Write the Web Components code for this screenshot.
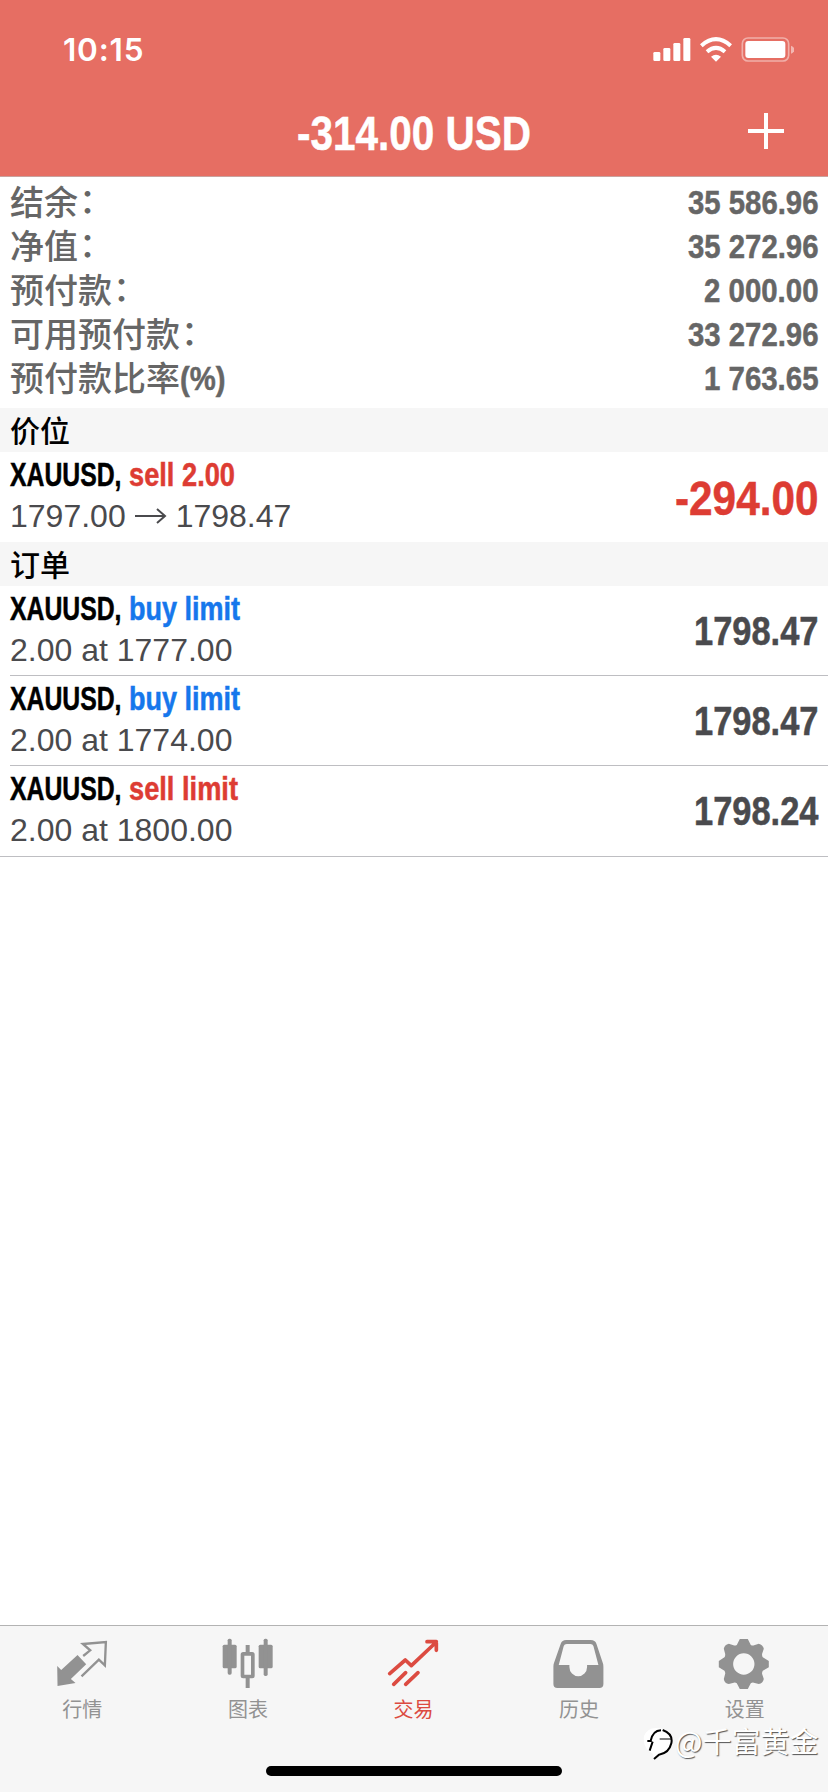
<!DOCTYPE html>
<html lang="zh-CN">
<head>
<meta charset="utf-8">
<title>交易</title>
<style>
body{margin:0;background:#fff;font-family:"Liberation Sans","Noto Sans CJK SC",sans-serif}
</style>
</head>
<body>
<trade-app></trade-app>
<script>
const define=(name,html,setup)=>customElements.define(name,class extends HTMLElement{
  connectedCallback(){
    if(this.shadowRoot)return;
    const t=document.createElement('template');
    t.innerHTML=html;
    this.attachShadow({mode:'open'}).appendChild(t.content.cloneNode(true));
    if(setup)setup(this,this.shadowRoot);
  }
});

// Condensed bold text: natural glyphs squeezed horizontally to the width in "w".
const ruler=document.createElement('canvas').getContext('2d');
define('cond-text',`<style>
:host{display:block;flex:none}
span{display:block;width:max-content;white-space:pre;font-family:"Liberation Sans",sans-serif;font-weight:700;transform-origin:0 0;-webkit-text-stroke:.5px currentColor}
</style><span></span>`,(el,r)=>{
  const s=r.querySelector('span'),a=n=>el.getAttribute(n),size=+a('size'),w=+a('w');
  ruler.font=`700 ${size}px "Liberation Sans"`;
  const natural=ruler.measureText(a('text')).width;
  el.style.width=w+'px';el.style.height=a('h')+'px';
  s.style.fontSize=size+'px';
  s.style.lineHeight=2*(+a('base')+.8-.3465*size)+'px';
  s.style.marginRight=(w-natural)+'px';
  s.style.transform=`scaleX(${w/natural})`;
  s.textContent=a('text');
});

define('status-bar',`<style>
:host{display:flex;justify-content:space-between;height:88px;box-sizing:border-box;padding:0 34px 0 63px;color:#fff}
.time{font:600 31.5px/38px Inter,sans-serif;margin-top:31px;letter-spacing:.8px}
svg{display:block;margin-top:34px}
</style>
<span class="time">10:15</span>
<svg width="142" height="32" viewBox="713 102 426 96" fill="#fff">
<rect x="717" y="156" width="21" height="27" rx="4"/><rect x="747" y="144" width="21" height="39" rx="4"/>
<rect x="777" y="129" width="21" height="54" rx="4"/><rect x="807" y="114" width="21" height="69" rx="4"/>
<g fill="none" stroke="#fff" stroke-width="12"><path d="M861 137Q905 98 949 137"/><path d="M878 155Q905 132 932 155"/></g>
<path d="M890 170Q905 158 920 170L905 185Z"/>
<rect x="984" y="114" width="139" height="69" rx="17" fill="none" stroke="#fff" stroke-opacity=".45" stroke-width="5"/>
<rect x="993" y="123" width="120" height="51" rx="9"/><path d="M1130 137Q1140 141 1140 149Q1140 157 1130 161Z" fill-opacity=".5"/>
</svg>`);

define('app-header',`<style>
:host{display:block;height:177px;box-sizing:border-box;background:#e66e63;border-bottom:1px solid #c9a29e;color:#fff}
.bar{display:grid;grid-template-columns:1fr auto 1fr;height:88px}
svg{display:block;justify-self:end;margin:25px 44px 0 0}
</style><status-bar></status-bar>
<div class="bar"><span></span><cond-text text="-314.00 USD" size="49" w="234" h="80" base="61.2"></cond-text>
<svg width="36" height="36" viewBox="0 0 36 36"><path d="M18 0V36M0 18H36" stroke="#fff" stroke-width="4"/></svg></div>`);

define('summary-row',`<style>
:host{display:flex;justify-content:space-between;height:44px;padding:0 10px;color:#666}
.l{font:500 34px/39px "Noto Sans CJK SC",sans-serif;display:flex;white-space:nowrap}
i{font-style:normal;position:relative;top:-2px;left:1px}
</style><span class="l"></span>`,(el,r)=>{
  const l=r.querySelector('.l'),a=n=>el.getAttribute(n);
  l.textContent=a('label');
  l.insertAdjacentHTML('beforeend',a('unit')?`<cond-text text="${a('unit')}" size="33" w="45.5" h="44" base="32.5"></cond-text>`:'<i>：</i>');
  l.insertAdjacentHTML('afterend',`<cond-text text="${a('value')}" size="34" w="${a('w')}" h="44" base="32.7"></cond-text>`);
});

define('section-title',`<style>
:host{display:block;height:44px;background:#f6f6f6;padding-left:10px;color:#000;font:500 30px/42px "Noto Sans CJK SC",sans-serif}
</style><slot></slot>`);

define('trade-row',`<style>
:host{display:flex;justify-content:space-between;height:90px;padding:0 10px;position:relative;color:#4a4a4d}
:host([line])::after{content:"";position:absolute;left:10px;right:0;bottom:0;height:1px;background:#bebec2}
:host([line=full])::after{left:0}
:host([line=full]){height:91px}
.t{display:flex;gap:7px;color:#000;height:47px}
.d{font:32px/36px "Liberation Sans",sans-serif;display:flex;align-items:center;margin-top:-1px;white-space:pre}
.buy{color:#1677ec}.sell{color:#dd3c33}
::slotted(svg){margin:0 9px 0 9px}
</style><div><div class="t"></div><div class="d"><slot></slot></div></div>`,(el,r)=>{
  const a=n=>el.getAttribute(n);
  r.querySelector('.t').innerHTML=`<cond-text text="XAUUSD," size="32.5" w="111.5" h="44" base="33.7"></cond-text><cond-text class="${a('side')}" text="${a('kind')}" size="32.5" w="${a('kw')}" h="44" base="33.7"></cond-text>`;
  const big=a('big')!==null;
  r.querySelector('div').insertAdjacentHTML('afterend',`<cond-text class="${big?'sell':''}" text="${a('price')}" size="${big?49:40}" w="${big?143.5:124.5}" h="90" base="${big?62.2:58.7}"></cond-text>`);
});

const icons={
quotes:`<path d="M171 168L183 180L232 135L258 163L212 207L226 219L172 228Z"/><path d="M249 138L270 121L248 102L317 96L314 166L296 149L244 199" fill="none" stroke="currentColor" stroke-width="7"/>`,
chart:`<rect x="669" y="104" width="42" height="71" rx="5"/><rect x="684" y="86" width="12" height="108" rx="5"/><rect x="777" y="104" width="42" height="71" rx="5"/><rect x="792" y="86" width="12" height="112" rx="5"/><path d="M744 105V130M744 200V234" stroke="currentColor" stroke-width="12"/><rect x="728.5" y="131.5" width="31" height="68" rx="2" fill="none" stroke="currentColor" stroke-width="11"/>`,
trade:`<g fill="none" stroke="currentColor" stroke-width="11" stroke-linecap="round" stroke-linejoin="round"><path d="M59 191L106 150L124 167L199 96M171 95H199V121M71 223L107 188M107 223L144 188"/></g>`,
history:`<path fill-rule="evenodd" d="M587 90H661Q674 90 678 101L697 158Q699 163 699 170V222Q699 234 687 234H561Q549 234 549 222V170Q549 163 551 158L571 101Q575 90 587 90ZM589 102Q582 102 580 108L565 165H597V171A26 27 0 0 0 650 171V165H684L669 108Q667 102 660 102Z"/>`,
settings:`<path fill-rule="evenodd" d="M360 87H384L393 105Q398 108 403 106L417 101Q429 104 432 116L427 131Q426 137 429 142L447 153V172L429 182Q426 187 427 192L432 207Q429 220 417 222L402 218Q397 217 393 220L384 237H360L351 220Q347 217 342 218L327 222Q314 220 312 207L316 192Q317 187 314 182L297 172V153L314 142Q317 137 316 131L312 116Q314 104 327 101L341 106Q346 108 351 105ZM372 130A32 32 0 1 0 372 194A32 32 0 1 0 372 130Z"/>`};
define('tab-item',`<style>
:host{flex:1;display:flex;flex-direction:column;align-items:center;color:#929292;font:20px/28px "Noto Sans CJK SC",sans-serif;padding-top:11px}
:host([active]){color:#dc4b41}
svg{width:52px;height:52px;overflow:visible;fill:currentColor;margin-bottom:6px}
span{margin-right:1px}
</style><svg></svg><span><slot></slot></span>`,(el,r)=>{
  const s=r.querySelector('svg');s.setAttribute('viewBox',el.getAttribute('x')+' 81 156 156');
  s.innerHTML=icons[el.getAttribute('icon')];
});

define('tab-bar',`<style>
:host{display:block;height:167px;box-sizing:border-box;background:#f6f6f6;border-top:1px solid #b3b3b3;position:relative}
nav{display:flex;height:140px}
.home{width:296px;height:10px;border-radius:5px;background:#000;margin:0 auto}
.mark{position:absolute;left:643px;top:92px;display:flex;align-items:center;color:#fff;font:29px/44px "Noto Sans CJK SC",sans-serif;text-shadow:1px 1px 1px #555;white-space:nowrap}
.mark svg{display:block;width:31px;height:36px;margin:8px 1px 0 0}
</style><nav>
<tab-item icon="quotes" x="170.4">行情</tab-item><tab-item icon="chart" x="667">图表</tab-item><tab-item icon="trade" x="54" active>交易</tab-item><tab-item icon="history" x="550.8">历史</tab-item><tab-item icon="settings" x="297.6">设置</tab-item></nav>
<div class="home"></div>
<div class="mark"><svg viewBox="67 352 93 108"><path d="M70 382Q82 355 110 358Q150 360 153 392Q153 425 116 442L100 450L96 435Q65 420 70 382Z" fill="#fff"/><g fill="none" stroke="#000" stroke-width="6"><path d="M80 397H90Q96 366 121 365M96 399L87 426"/><path d="M117 391H151" stroke-width="3"/><path d="M126 364Q158 376 152 404Q145 434 115 438L100 451"/></g></svg>@千富黄金</div>`);

define('trade-app',`<style>
:host{display:flex;flex-direction:column;width:828px;height:1792px;background:#fff;overflow:hidden}
.sum{padding:4px 0 7px}
main{flex:1}
</style><app-header></app-header><main>
<div class="sum">
<summary-row label="结余" value="35 586.96" w="130.5"></summary-row>
<summary-row label="净值" value="35 272.96" w="130.5"></summary-row>
<summary-row label="预付款" value="2 000.00" w="114.5"></summary-row>
<summary-row label="可用预付款" value="33 272.96" w="130.5"></summary-row>
<summary-row label="预付款比率" unit="(%)" value="1 763.65" w="114.5"></summary-row>
</div>
<section-title>价位</section-title>
<trade-row side="sell" kind="sell 2.00" kw="106" price="-294.00" big>1797.00<svg width="32" height="18" viewBox="0 0 32 18" fill="none" stroke="#4a4a4d" stroke-width="2"><path d="M0 9H30M22 2L30 9L22 16"/></svg>1798.47</trade-row>
<section-title>订单</section-title>
<trade-row line side="buy" kind="buy limit" kw="111" price="1798.47">2.00 at 1777.00</trade-row>
<trade-row line side="buy" kind="buy limit" kw="111" price="1798.47">2.00 at 1774.00</trade-row>
<trade-row line="full" side="sell" kind="sell limit" kw="109" price="1798.24">2.00 at 1800.00</trade-row>
</main><tab-bar></tab-bar>`);
</script>
</body>
</html>
